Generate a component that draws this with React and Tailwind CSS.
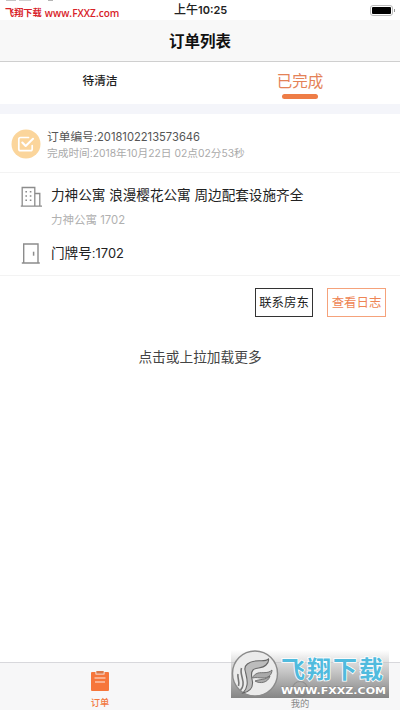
import React from "react";

function CheckBadge() {
  return (
    <svg className="h-[30px] w-[30px] shrink-0" viewBox="0 0 30 30" fill="none">
      <circle cx="15" cy="15" r="14.5" fill="#fbd59b" />
      <path d="M17.5 8.5H9.5Q7.8 8.5 7.8 10.2V20Q7.8 21.7 9.5 21.7H19.5Q21.2 21.7 21.2 20V16.5" stroke="#fff" strokeWidth="1.7" strokeLinecap="round" />
      <path d="M11.3 13.5L14.7 17L22 9.8" stroke="#fff" strokeWidth="2.1" strokeLinecap="round" strokeLinejoin="round" />
    </svg>
  );
}

function BuildingIcon() {
  return (
    <svg className="h-[22px] w-[22px] shrink-0" viewBox="0 0 22 22" fill="none" stroke="#8c8c8c" strokeWidth="1.3">
      <path d="M2.2 21V2.5H14.8V21M14.8 8.5H19.8V21M0.8 21.2H22" />
      <path d="M5.4 6.8H7M9.8 6.8H11.4M5.4 11H7M9.8 11H11.4M5.4 15.2H7M9.8 15.2H11.4" strokeWidth="1.4" />
    </svg>
  );
}

function DoorIcon() {
  return (
    <svg className="h-[22px] w-[22px] shrink-0" viewBox="0 0 22 22" fill="none" stroke="#8c8c8c" strokeWidth="1.4">
      <path d="M3.7 20V1H18V20M1.8 20H19.8" />
      <path d="M13.6 8.7V12.7" strokeWidth="1.5" />
    </svg>
  );
}

function ClipboardIcon() {
  return (
    <svg className="h-[20px] w-[18px]" viewBox="0 0 18 20">
      <path d="M1 1H4.5V3.5H13.5V1H17Q18 1 18 2V19Q18 20 17 20H1Q0 20 0 19V2Q0 1 1 1Z" fill="#f6763b" />
      <rect x="5.3" y="0" width="7.4" height="2.7" fill="#d97849" />
      <path d="M3.5 7H14.5M4 11H14" stroke="#fff" strokeWidth="1.1" opacity="0.85" />
    </svg>
  );
}

function Num({ className, children }) {
  return <span className={`font-['Inter',sans-serif] ${className}`}>{children}</span>;
}

function Watermark() {
  return (
    <div className="absolute left-[231px] top-[650px] h-[48px] w-[158px] bg-linear-to-b from-[#aaaaaa00] via-[#c0c0c0] via-50% to-[#858585]">
      <svg className="h-[48px] w-[158px]" viewBox="0 0 158 48">
        <circle cx="69" cy="39" r="7.5" fill="none" stroke="#777" strokeWidth="1.2" opacity="0.5" />
        <circle cx="24" cy="23.5" r="22.5" fill="#ebebeb" stroke="#8b8b8b" strokeWidth="1.4" />
        <path
          d="M37.5 9C34 12 29 10 24 11C18 12 13 15 14 20C15 25 17 30 16 35C15.500 39 14 41 12 43C18 42 22 38 21.500 32C21 28 19 23 22 20C25 17 31 19 35 15C37 13 38 11 37.500 9Z"
          fill="#bcbcbc"
          stroke="#666"
          strokeWidth="1.1"
        />
        <path d="M41 20C37 24 31 22 27 23C24 24 22 26 21.500 28C25 27 28 28 32 28C37 28 41 25 41 20ZM39 26C35 30 29 29 24 31C29 34 37 33 39 26Z" fill="#aaa" stroke="#6b6b6b" strokeWidth="0.9" />
        <path d="M10.500 18C8.500 24 13 29 12 35C11.700 38 10.500 39 9.500 40M7 24C6 28 9 31 7.500 36" fill="none" stroke="#777" strokeWidth="1.6" />
        <text
          x="50"
          y="28"
          textLength="102"
          fill="#50bbde"
          stroke="#fff"
          strokeWidth="1.6"
          paintOrder="stroke"
          className="font-['Noto_Sans_CJK_SC',sans-serif] text-[24px] font-bold"
        >
          飞翔下载
        </text>
        <text
          x="50"
          y="44.4"
          textLength="105"
          lengthAdjust="spacingAndGlyphs"
          fill="#fff"
          stroke="#888"
          strokeWidth="0.8"
          paintOrder="stroke"
          className="font-['DejaVu_Sans',sans-serif] text-[9.5px] font-bold"
        >
          WWW.FXXZ.COM
        </text>
      </svg>
    </div>
  );
}

export default function App() {
  return (
    <div className="relative flex h-[710px] w-[400px] flex-col overflow-hidden bg-white font-['Liberation_Sans','Noto_Sans_CJK_SC',sans-serif] text-[#222]">
      <div className="flex h-5 shrink-0 items-center justify-between pr-[5px]">
        <div className="w-[170px] pl-[5px] whitespace-nowrap text-[#d82229]">
          <div className="flex h-px gap-[3px] pl-px">
            <div className="w-[10px] bg-[#c4c4c4]" />
            <div className="w-[12px] bg-[#d0d0d0]" />
            <div className="ml-[14px] w-[5px] bg-[#b5b5b5]" />
          </div>
          <div className="flex items-center gap-[3px] pt-[5px] leading-[14px]">
            <span className="text-[9.2px] font-bold">飞翔下载</span>
            <span className="font-['Open_Sans',sans-serif] text-[10px] font-semibold tracking-[0.05px]">www.FXXZ.com</span>
          </div>
        </div>
        <div className="flex-1 pl-[4px] text-[12px] leading-5 font-medium whitespace-nowrap">
          上午<Num className="text-[11px] font-semibold">10:25</Num>
        </div>
        <div className="flex items-center gap-px">
          <div className="h-[11px] w-[23px] rounded-[3px] border border-[#bbb] p-px">
            <div className="h-full w-full rounded-[1px] bg-black" />
          </div>
          <div className="h-[3px] w-px bg-[#999]" />
        </div>
      </div>

      <header className="flex h-[42px] shrink-0 items-center justify-center border-b border-[#cfcfcf] bg-[#f8f8f8] pt-[2px] text-[15.5px] font-bold text-[#111]">
        订单列表
      </header>

      <nav className="grid h-[42px] shrink-0 grid-cols-2">
        <div className="pt-[10px] text-center text-[11.7px] leading-[18px] font-medium">待清洁</div>
        <div className="flex flex-col items-center pt-[9px] text-[15.5px] leading-[22px] text-[#e48258]">
          已完成
          <div className="mt-[1px] h-[5px] w-[36px] rounded-full bg-[#ee7d47]" />
        </div>
      </nav>
      <div className="h-[10px] shrink-0 bg-[#f4f5fa]" />

      <section className="flex h-[59px] shrink-0 items-center gap-[6px] border-b border-[#f3f3f3] pl-[11px] pt-[2px]">
        <CheckBadge />
        <div className="pt-[2px] whitespace-nowrap">
          <div className="text-[11.7px] leading-4 text-[#555]">
            订单编号:<Num className="text-[11.2px]">2018102213573646</Num>
          </div>
          <div className="text-[10.7px] leading-4 text-[#aaa]">
            完成时间:<Num className="text-[10.300px]">2018</Num>年<Num className="text-[10.300px]">10</Num>月<Num className="text-[10.300px]">22</Num>日{" "}
            <Num className="text-[10.300px]">02</Num>点<Num className="text-[10.300px]">02</Num>分<Num className="text-[10.300px]">53</Num>秒
          </div>
        </div>
      </section>

      <section className="flex h-[103px] shrink-0 flex-col border-b border-[#f3f3f3] pl-5 whitespace-nowrap">
        <div className="mt-[12px] flex items-start gap-[9px]">
          <BuildingIcon />
          <div className="pt-px">
            <div className="text-[13.6px] leading-5">力神公寓 浪漫樱花公寓 周边配套设施齐全</div>
            <div className="mt-[6px] text-[11.5px] leading-4 text-[#b0b0b0]">
              力神公寓 <Num className="text-[11.3px]">1702</Num>
            </div>
          </div>
        </div>
        <div className="mt-[15px] flex items-center gap-[9px]">
          <DoorIcon />
          <div className="text-[13.6px] leading-5">
            门牌号:<Num className="text-[12.9px]">1702</Num>
          </div>
        </div>
      </section>

      <div className="mt-[12px] flex shrink-0 justify-end gap-[14px] pr-[14px] text-[12.4px]">
        <button className="h-[29px] w-[58px] border border-[#333] pt-px whitespace-nowrap">联系房东</button>
        <button className="h-[29px] w-[59px] border border-[#f5a27b] pt-px whitespace-nowrap text-[#ee8555]">查看日志</button>
      </div>
      <div className="mt-[30px] text-center text-[13.7px] leading-[22px] text-[#444]">点击或上拉加载更多</div>

      <footer className="mt-auto grid h-[48px] shrink-0 grid-cols-2 border-t border-[#d8d8dc] bg-[#f7f7f8] text-[9.3px] leading-[14px]">
        <div className="flex flex-col items-center pt-[8px] text-[#f2783f]">
          <ClipboardIcon />
          <span className="mt-[5px] font-medium">订单</span>
        </div>
        <div className="flex flex-col items-center pt-[34px] text-[#888]">我的</div>
      </footer>
      <Watermark />
    </div>
  );
}
